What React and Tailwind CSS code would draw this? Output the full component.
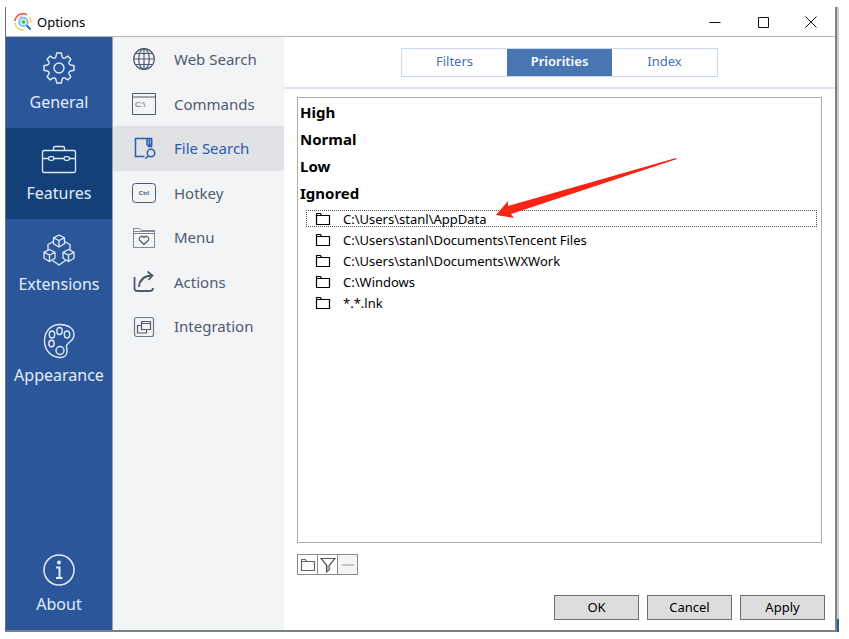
import { useState } from "react";

const MAIN_ITEMS = [
  { id: "general", label: "General", icon: GearIcon },
  { id: "features", label: "Features", icon: CaseIcon },
  { id: "extensions", label: "Extensions", icon: CubesIcon },
  { id: "appearance", label: "Appearance", icon: PaletteIcon },
];

const FEATURE_ITEMS = [
  { id: "web", label: "Web Search", icon: GlobeIcon },
  { id: "commands", label: "Commands", icon: CommandIcon },
  { id: "files", label: "File Search", icon: FileSearchIcon },
  { id: "hotkey", label: "Hotkey", icon: KeyIcon },
  { id: "menu", label: "Menu", icon: MenuIcon },
  { id: "actions", label: "Actions", icon: ShareIcon },
  { id: "integration", label: "Integration", icon: WindowsIcon },
];

const TABS = ["Filters", "Priorities", "Index"];

const PRIORITIES = ["High", "Normal", "Low", "Ignored"];

const IGNORED = [
  "C:\\Users\\stanl\\AppData",
  "C:\\Users\\stanl\\Documents\\Tencent Files",
  "C:\\Users\\stanl\\Documents\\WXWork",
  "C:\\Windows",
  "*.*.lnk",
];

function LogoIcon() {
  return (
    <svg className="size-[18px]" viewBox="0 0 18 18" fill="none">
      <path d="M1 8a8 8 0 0 1 12-6.200" stroke="#e4514d" strokeWidth="1.500" />
      <path d="M3.500 6.500a6 6 0 0 1 5.500-3.500" stroke="#f5a9a2" strokeWidth="1" />
      <path d="M1 10a8 8 0 0 0 9 7" stroke="#f3cf62" strokeWidth="1.500" />
      <path d="M15 4a8 8 0 0 1 2 6" stroke="#f3cf62" strokeWidth="1.500" />
      <circle cx="9.500" cy="9" r="4.300" fill="#d8f0fb" stroke="#5cbcec" strokeWidth="1.600" />
      <circle cx="9.500" cy="9" r="1.800" fill="#5cb531" />
      <path d="M12.800 12.500l3.700 4" stroke="#2d6fb5" strokeWidth="2" />
    </svg>
  );
}

function GearIcon() {
  const quarter =
    "M16 1h2.300l.7 3.200q.8 2.800 3.200 1.600l2.600-1.700 3.100 3.100-1.700 2.600q-1.200 2.400 1.600 3.200l3.200.7V16";
  return (
    <svg className="size-8" viewBox="0 0 32 32" fill="none" stroke="currentColor" strokeWidth="1.400" strokeLinejoin="round">
      <path d={quarter} />
      <path d={quarter} transform="rotate(90 16 16)" />
      <path d={quarter} transform="rotate(180 16 16)" />
      <path d={quarter} transform="rotate(270 16 16)" />
      <circle cx="16" cy="16" r="5" />
    </svg>
  );
}

function CaseIcon() {
  return (
    <svg className="h-8 w-9" viewBox="0 0 36 32" fill="none" stroke="currentColor" strokeWidth="1.300">
      <rect x="1.500" y="7.500" width="33" height="22" rx="1.500" />
      <path d="M12.500 7V5q0-1.500 1.500-1.500h8q1.500 0 1.500 1.500v2" />
      <path d="M1.500 15.500h6M13 15.500h10M28.500 15.500h6" />
      <rect x="7.500" y="13.700" width="5.500" height="3.600" rx="1.800" />
      <rect x="23" y="13.700" width="5.500" height="3.600" rx="1.800" />
    </svg>
  );
}

function CubesIcon() {
  return (
    <svg className="size-8" viewBox="0 0 32 32" fill="none" stroke="currentColor" strokeWidth="1.300" strokeLinejoin="round">
      <path d="M16 1l5.500 2.800v6L16 13l-5.500-3.200v-6zM10.500 3.800L16 6.500l5.500-2.700M16 6.500V13" />
      <path d="M6.500 15.500l5.500 2.800v6l-5.500 3.200L1 24.300v-6zM1 18.300L6.500 21l5.500-2.700M6.500 21v6.500" />
      <path d="M25.500 15.500l5.500 2.800v6l-5.500 3.200-5.500-3.200v-6zM20 18.300l5.500 2.700 5.500-2.700M25.500 21v6.500" />
      <path d="M10.500 7.500L5 10.500v5.500M21.500 7.500l5.500 3v5.500M9.500 26.500L16 31l6.500-4.500" />
    </svg>
  );
}

function PaletteIcon() {
  return (
    <svg className="h-9 w-8" viewBox="0 0 32 36" fill="none" stroke="currentColor" strokeWidth="1.400">
      <path d="M17 1.500C8 1.500 1.500 8 1.500 18S9 34.500 17.500 34.500c4 0 6.500-2.500 6.500-6 0-2.500-.5-3.500-.5-5.500 0-4 7.500-4 7.500-11.500 0-6-6-10-14-10z" />
      <ellipse cx="16.500" cy="8" rx="2.700" ry="3.500" />
      <ellipse cx="9" cy="11.500" rx="2.700" ry="3.500" />
      <ellipse cx="24" cy="11.500" rx="2.700" ry="3.500" />
      <ellipse cx="8.500" cy="20.500" rx="2.700" ry="3.200" />
      <circle cx="17" cy="27.500" r="4" />
    </svg>
  );
}

function InfoIcon() {
  return (
    <svg className="size-8" viewBox="0 0 32 32" fill="none" stroke="currentColor">
      <circle cx="16" cy="16" r="15" strokeWidth="1.500" />
      <circle cx="16" cy="8.500" r="2" fill="currentColor" stroke="none" />
      <path d="M13 13.500h3.500v10.500M13 24h6.500" strokeWidth="2" />
    </svg>
  );
}

function GlobeIcon() {
  return (
    <svg className="size-6" viewBox="0 0 24 24" fill="none" stroke="currentColor" strokeWidth="1.200">
      <circle cx="12" cy="12" r="10.300" />
      <ellipse cx="12" cy="12" rx="5.300" ry="10.300" />
      <path d="M12 1.700v20.600M1.700 12h20.600M3.500 6.500h17M3.500 17.500h17" />
    </svg>
  );
}

function CommandIcon() {
  return (
    <svg className="size-6" viewBox="0 0 24 24" fill="none" stroke="currentColor">
      <path d="M.5 1.500h23v21H.5zM.5 5h23" />
      <text x="3" y="15" fontSize="8" fontFamily="Liberation Sans, sans-serif" fill="currentColor" stroke="none">C:\</text>
    </svg>
  );
}

function FileSearchIcon() {
  return (
    <svg className="size-6" viewBox="0 0 24 24" fill="none" stroke="currentColor" strokeWidth="1.500">
      <path d="M12.500 20.500H3.500v-18h16v9" />
      <path d="M15 2.500v6l2.200 2.500 2.300-2.500v-6M17.200 3v7" />
      <circle cx="19" cy="17" r="3.700" />
      <path d="M16.300 19.800l-3 3" />
    </svg>
  );
}

function KeyIcon() {
  return (
    <svg className="size-6" viewBox="0 0 24 24" fill="none" stroke="currentColor">
      <rect x=".5" y="2.500" width="23" height="19" rx="3" />
      <text x="12" y="14" fontSize="6" fontWeight="700" textAnchor="middle" fontFamily="Liberation Sans, sans-serif" fill="currentColor" stroke="none">Ctrl</text>
    </svg>
  );
}

function MenuIcon() {
  return (
    <svg className="size-6" viewBox="0 0 24 24" fill="none" stroke="currentColor">
      <path d="M1.500 21.500v-19h6l2 2h13v17zM1.500 5.500h21M1.500 7.500h21" strokeOpacity=".7" />
      <path d="M12 18.500l-4.200-4c-2-2.500 1.700-5.500 4.200-3 2.500-2.500 6.200.5 4.200 3z" strokeWidth="1.200" />
    </svg>
  );
}

function ShareIcon() {
  return (
    <svg className="size-6" viewBox="0 0 24 24" fill="none" stroke="currentColor" strokeWidth="1.800">
      <path d="M2.500 7v11q0 3 3 3h12q3.500 0 3.500-3" />
      <path d="M7 17C7.500 10 11 6 19.500 5.500M15.500 1.500l5 4-4 4.500" />
    </svg>
  );
}

function WindowsIcon() {
  return (
    <svg className="size-6" viewBox="0 0 24 24" fill="none" stroke="currentColor" strokeWidth="1.200">
      <rect x="2.500" y="2.500" width="19" height="19" rx="2" strokeOpacity=".8" />
      <path d="M9.500 6.500h9v8h-9zM9.500 8.500h9" />
      <path d="M9.500 10.500h-4v7.500h9v-3.500" />
    </svg>
  );
}

function FolderIcon() {
  return (
    <svg className="size-4 shrink-0" viewBox="0 0 16 16" fill="none" stroke="currentColor" strokeWidth="1.200" strokeLinejoin="round">
      <path d="M1.500 13.500v-11h4l1 2h8v9zM1.500 4.500h5" />
    </svg>
  );
}

function PointerArrow() {
  return (
    <svg
      className="pointer-events-none absolute top-[58px] left-[197px] h-[64px] w-[184px]"
      viewBox="0 0 184 64"
      fill="#fb2414"
    >
      <path d="M1 59L13 45v5L181 2l1 1L16 58l3 4z" />
    </svg>
  );
}

function MainItem({ item, active, onClick }) {
  const Icon = item.icon;
  return (
    <button
      type="button"
      onClick={onClick}
      className={
        "flex h-[91px] w-full flex-col items-center justify-center gap-0.5 text-[16px] leading-7 text-[#e2ecfa] " +
        (active ? "bg-[#134079]" : "bg-[#2b579a]")
      }
    >
      <span className="flex h-9 items-center">
        <Icon />
      </span>
      {item.label}
    </button>
  );
}

export default function App() {
  const [section, setSection] = useState("features");
  const [feature, setFeature] = useState("files");
  const [tab, setTab] = useState("Priorities");
  const [selected, setSelected] = useState(0);

  return (
    <div className="flex min-h-screen bg-white pt-[7px] pr-[10px] pb-[7px] pl-[5px] font-['Noto_Sans','Open_Sans',sans-serif] text-black">
      <div className="flex flex-1 flex-col border-r-2 border-b-2 border-l border-[#7b8282] border-l-[#6b7280]">
        <header className="flex h-[30px] items-center border-b border-[#b4b4b4] pl-2">
          <LogoIcon />
          <h1 className="ml-[5px] flex-1 text-[13px] leading-5">Options</h1>
          <button type="button" aria-label="Minimize" className="flex h-full w-12 items-center justify-center">
            <svg className="size-3" viewBox="0 0 12 12" stroke="#111"><path d="M.5 6.500h11" /></svg>
          </button>
          <button type="button" aria-label="Maximize" className="flex h-full w-12 items-center justify-center">
            <svg className="size-3" viewBox="0 0 12 12" fill="none" stroke="#111"><path d="M1.500 1.500h10v10h-10z" /></svg>
          </button>
          <button type="button" aria-label="Close" className="flex h-full w-12 items-center justify-center">
            <svg className="size-3" viewBox="0 0 12 12" stroke="#111"><path d="M.5.5l11 11M11.500.5l-11 11" /></svg>
          </button>
        </header>

        <div className="flex flex-1">
          <nav className="flex w-[107px] shrink-0 flex-col border-r border-[#8fa0b8] bg-[#2b579a]">
            {MAIN_ITEMS.map((item) => (
              <MainItem
                key={item.id}
                item={item}
                active={section === item.id}
                onClick={() => setSection(item.id)}
              />
            ))}
            <div className="mt-auto">
              <MainItem
                item={{ label: "About", icon: InfoIcon }}
                active={section === "about"}
                onClick={() => setSection("about")}
              />
            </div>
          </nav>

          <nav className="w-[171px] shrink-0 bg-[#f3f4f6]">
            <div className="grid h-[312px] grid-rows-7">
              {FEATURE_ITEMS.map((item) => {
                const Icon = item.icon;
                const active = feature === item.id;
                return (
                  <button
                    key={item.id}
                    type="button"
                    onClick={() => setFeature(item.id)}
                    className={
                      "flex items-center gap-[18px] pl-[19px] text-[15px] " +
                      (active ? "bg-[#e0e2e6] text-[#2b5ab0]" : "text-[#4d5a70]")
                    }
                  >
                    <Icon />
                    {item.label}
                  </button>
                );
              })}
            </div>
          </nav>

          <main className="flex min-w-0 flex-1 flex-col">
            <div className="flex h-[52px] items-center justify-center border-b-2 border-[#dbe4ee]">
              <div className="flex h-[29px] border border-[#cbd8ea]" role="tablist">
                {TABS.map((name) => (
                  <button
                    key={name}
                    type="button"
                    role="tab"
                    aria-selected={tab === name}
                    onClick={() => setTab(name)}
                    className={
                      "w-[105px] text-[13px] " +
                      (tab === name ? "bg-[#4876b4] font-semibold text-white" : "text-[#4a6db8]")
                    }
                  >
                    {name}
                  </button>
                ))}
              </div>
            </div>

            <div className="flex flex-1 flex-col pt-2 pr-[10px] pb-[10px] pl-[13px]">
              <div className="relative mr-[3px] flex-1 border border-[#abadb3] pt-px pr-1 pl-[2px]">
                {PRIORITIES.map((name) => (
                  <h2 key={name} className="text-[15px] leading-[27px] font-bold">
                    {name}
                  </h2>
                ))}
                <ul className="pt-px pl-[6px]">
                  {IGNORED.map((path, i) => (
                    <li key={path} className="h-[21px] pt-[2px]">
                      <button
                        type="button"
                        onClick={() => setSelected(i)}
                        className={
                          "flex h-[17px] w-full items-center gap-3 border border-dotted pl-2 text-[13px] leading-4 " +
                          (selected === i ? "border-[#555]" : "border-transparent")
                        }
                      >
                        <FolderIcon />
                        {path}
                      </button>
                    </li>
                  ))}
                </ul>
                <PointerArrow />
              </div>

              <div className="mt-[11px] flex h-[21px] w-[61px] divide-x divide-[#8a8a8a] border border-[#8a8a8a]">
                <button type="button" aria-label="Add folder" className="flex flex-1 items-center justify-center text-[#666]">
                  <FolderIcon />
                </button>
                <button type="button" aria-label="Add filter" className="flex flex-1 items-center justify-center">
                  <svg className="size-4" viewBox="0 0 16 16" fill="none" stroke="#555" strokeWidth="1.200">
                    <path d="M1 1.500h14L9.500 8v4.500L6.500 15V8z" />
                    <path d="M7 8h2.500v4L7 14z" fill="#aaa" stroke="none" />
                  </svg>
                </button>
                <button type="button" aria-label="Remove" disabled className="flex flex-1 items-center justify-center bg-[#f4f4f4]">
                  <svg className="size-3" viewBox="0 0 12 12" stroke="#b5b5b5" strokeWidth="1.500"><path d="M0 6h12" /></svg>
                </button>
              </div>

              <div className="mt-5 flex justify-end gap-2 text-[13px]">
                <button type="button" className="h-[25px] w-[85px] border border-[#707070] bg-[#dddddd]">OK</button>
                <button type="button" className="h-[25px] w-[85px] border border-[#707070] bg-[#dddddd]">Cancel</button>
                <button type="button" className="h-[25px] w-[85px] border border-[#707070] bg-[#dddddd]">Apply</button>
              </div>
            </div>
          </main>
        </div>
      </div>
      <div className="flex w-[2px] flex-col justify-end bg-[#c9cfcd]">
        <div className="h-[13px] bg-[#1f6480]" />
      </div>
    </div>
  );
}
